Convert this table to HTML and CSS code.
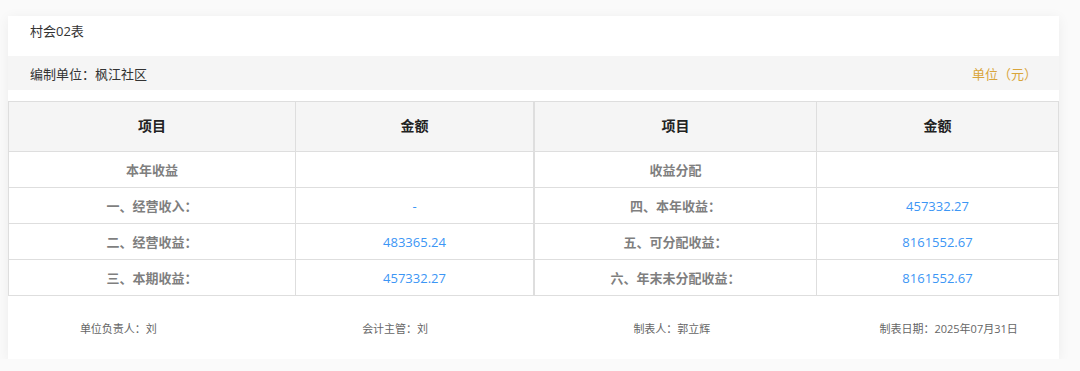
FILE: index.html
```html
<!DOCTYPE html>
<html lang="zh-CN">
<head>
  <meta charset="UTF-8">
  <meta name="viewport" content="width=device-width, initial-scale=1.0">
  <title>村会02表</title>
  <link rel="stylesheet" href="styles.css">
</head>
<body>
  <div class="card">
    <div class="report-title">村会02表</div>

    <div class="report-meta">
      <span>编制单位：枫江社区</span>
      <span class="unit">单位（元）</span>
    </div>

    <div class="tables">
      <table class="report-table left">
        <colgroup>
          <col class="col-item-left">
          <col>
        </colgroup>
        <thead>
          <tr>
            <th>项目</th>
            <th>金额</th>
          </tr>
        </thead>
        <tbody>
          <tr>
            <td class="label">本年收益</td>
            <td></td>
          </tr>
          <tr>
            <td class="label">一、经营收入：</td>
            <td class="value">-</td>
          </tr>
          <tr>
            <td class="label">二、经营收益：</td>
            <td class="value">483365.24</td>
          </tr>
          <tr>
            <td class="label">三、本期收益：</td>
            <td class="value">457332.27</td>
          </tr>
        </tbody>
      </table>

      <table class="report-table right">
        <colgroup>
          <col class="col-item-right">
          <col>
        </colgroup>
        <thead>
          <tr>
            <th>项目</th>
            <th>金额</th>
          </tr>
        </thead>
        <tbody>
          <tr>
            <td class="label">收益分配</td>
            <td></td>
          </tr>
          <tr>
            <td class="label">四、本年收益：</td>
            <td class="value">457332.27</td>
          </tr>
          <tr>
            <td class="label">五、可分配收益：</td>
            <td class="value">8161552.67</td>
          </tr>
          <tr>
            <td class="label">六、年末未分配收益：</td>
            <td class="value">8161552.67</td>
          </tr>
        </tbody>
      </table>
    </div>

    <div class="report-footer">
      <span>单位负责人：刘</span>
      <span>会计主管：刘</span>
      <span>制表人：郭立辉</span>
      <span>制表日期：2025年07月31日</span>
    </div>
  </div>
</body>
</html>
```

FILE: styles.css
```css
body {
  margin: 0;
  background: #fafafa;
  font-family: "Open Sans", "Noto Sans CJK SC", sans-serif;
  color: #333;
}

.card {
  width: 1051px;
  margin: 16px 0 0 8px;
  background: #fff;
  box-shadow: 0 2px 12px rgba(0, 0, 0, 0.06);
  overflow: hidden;
}

.report-title {
  padding: 5px 22px 15px;
  font-size: 13px;
  line-height: 20px;
  color: #333;
}

.report-meta {
  display: flex;
  justify-content: space-between;
  align-items: center;
  height: 34px;
  padding: 0 22px;
  background: #f5f5f5;
  font-size: 13px;
  color: #333;
}

.report-meta .unit {
  color: #d9a53b;
}

.tables {
  display: flex;
  margin-top: 11px;
}

.report-table {
  border-collapse: collapse;
  table-layout: fixed;
}

.report-table.left {
  width: 526px;
}

.report-table.right {
  flex: 1;
}

.col-item-left {
  width: 287px;
}

.col-item-right {
  width: 282px;
}

.report-table th,
.report-table td {
  border: 1px solid #dedede;
  text-align: center;
  padding: 0 8px;
}

.report-table th {
  height: 45px;
  padding-bottom: 4px;
  background: #f5f5f5;
  font-size: 14px;
  font-weight: bold;
  color: #222;
}

.report-table td {
  height: 35px;
  font-size: 13px;
}

.report-table .label {
  font-weight: bold;
  color: #7f7f7f;
}

.report-table .value {
  color: #3c96f5;
}

.report-footer {
  display: grid;
  grid-template-columns: repeat(4, 1fr);
  align-items: center;
  height: 63px;
  margin: 0 -28px;
  font-size: 11px;
  color: #666;
  text-align: center;
}
```
